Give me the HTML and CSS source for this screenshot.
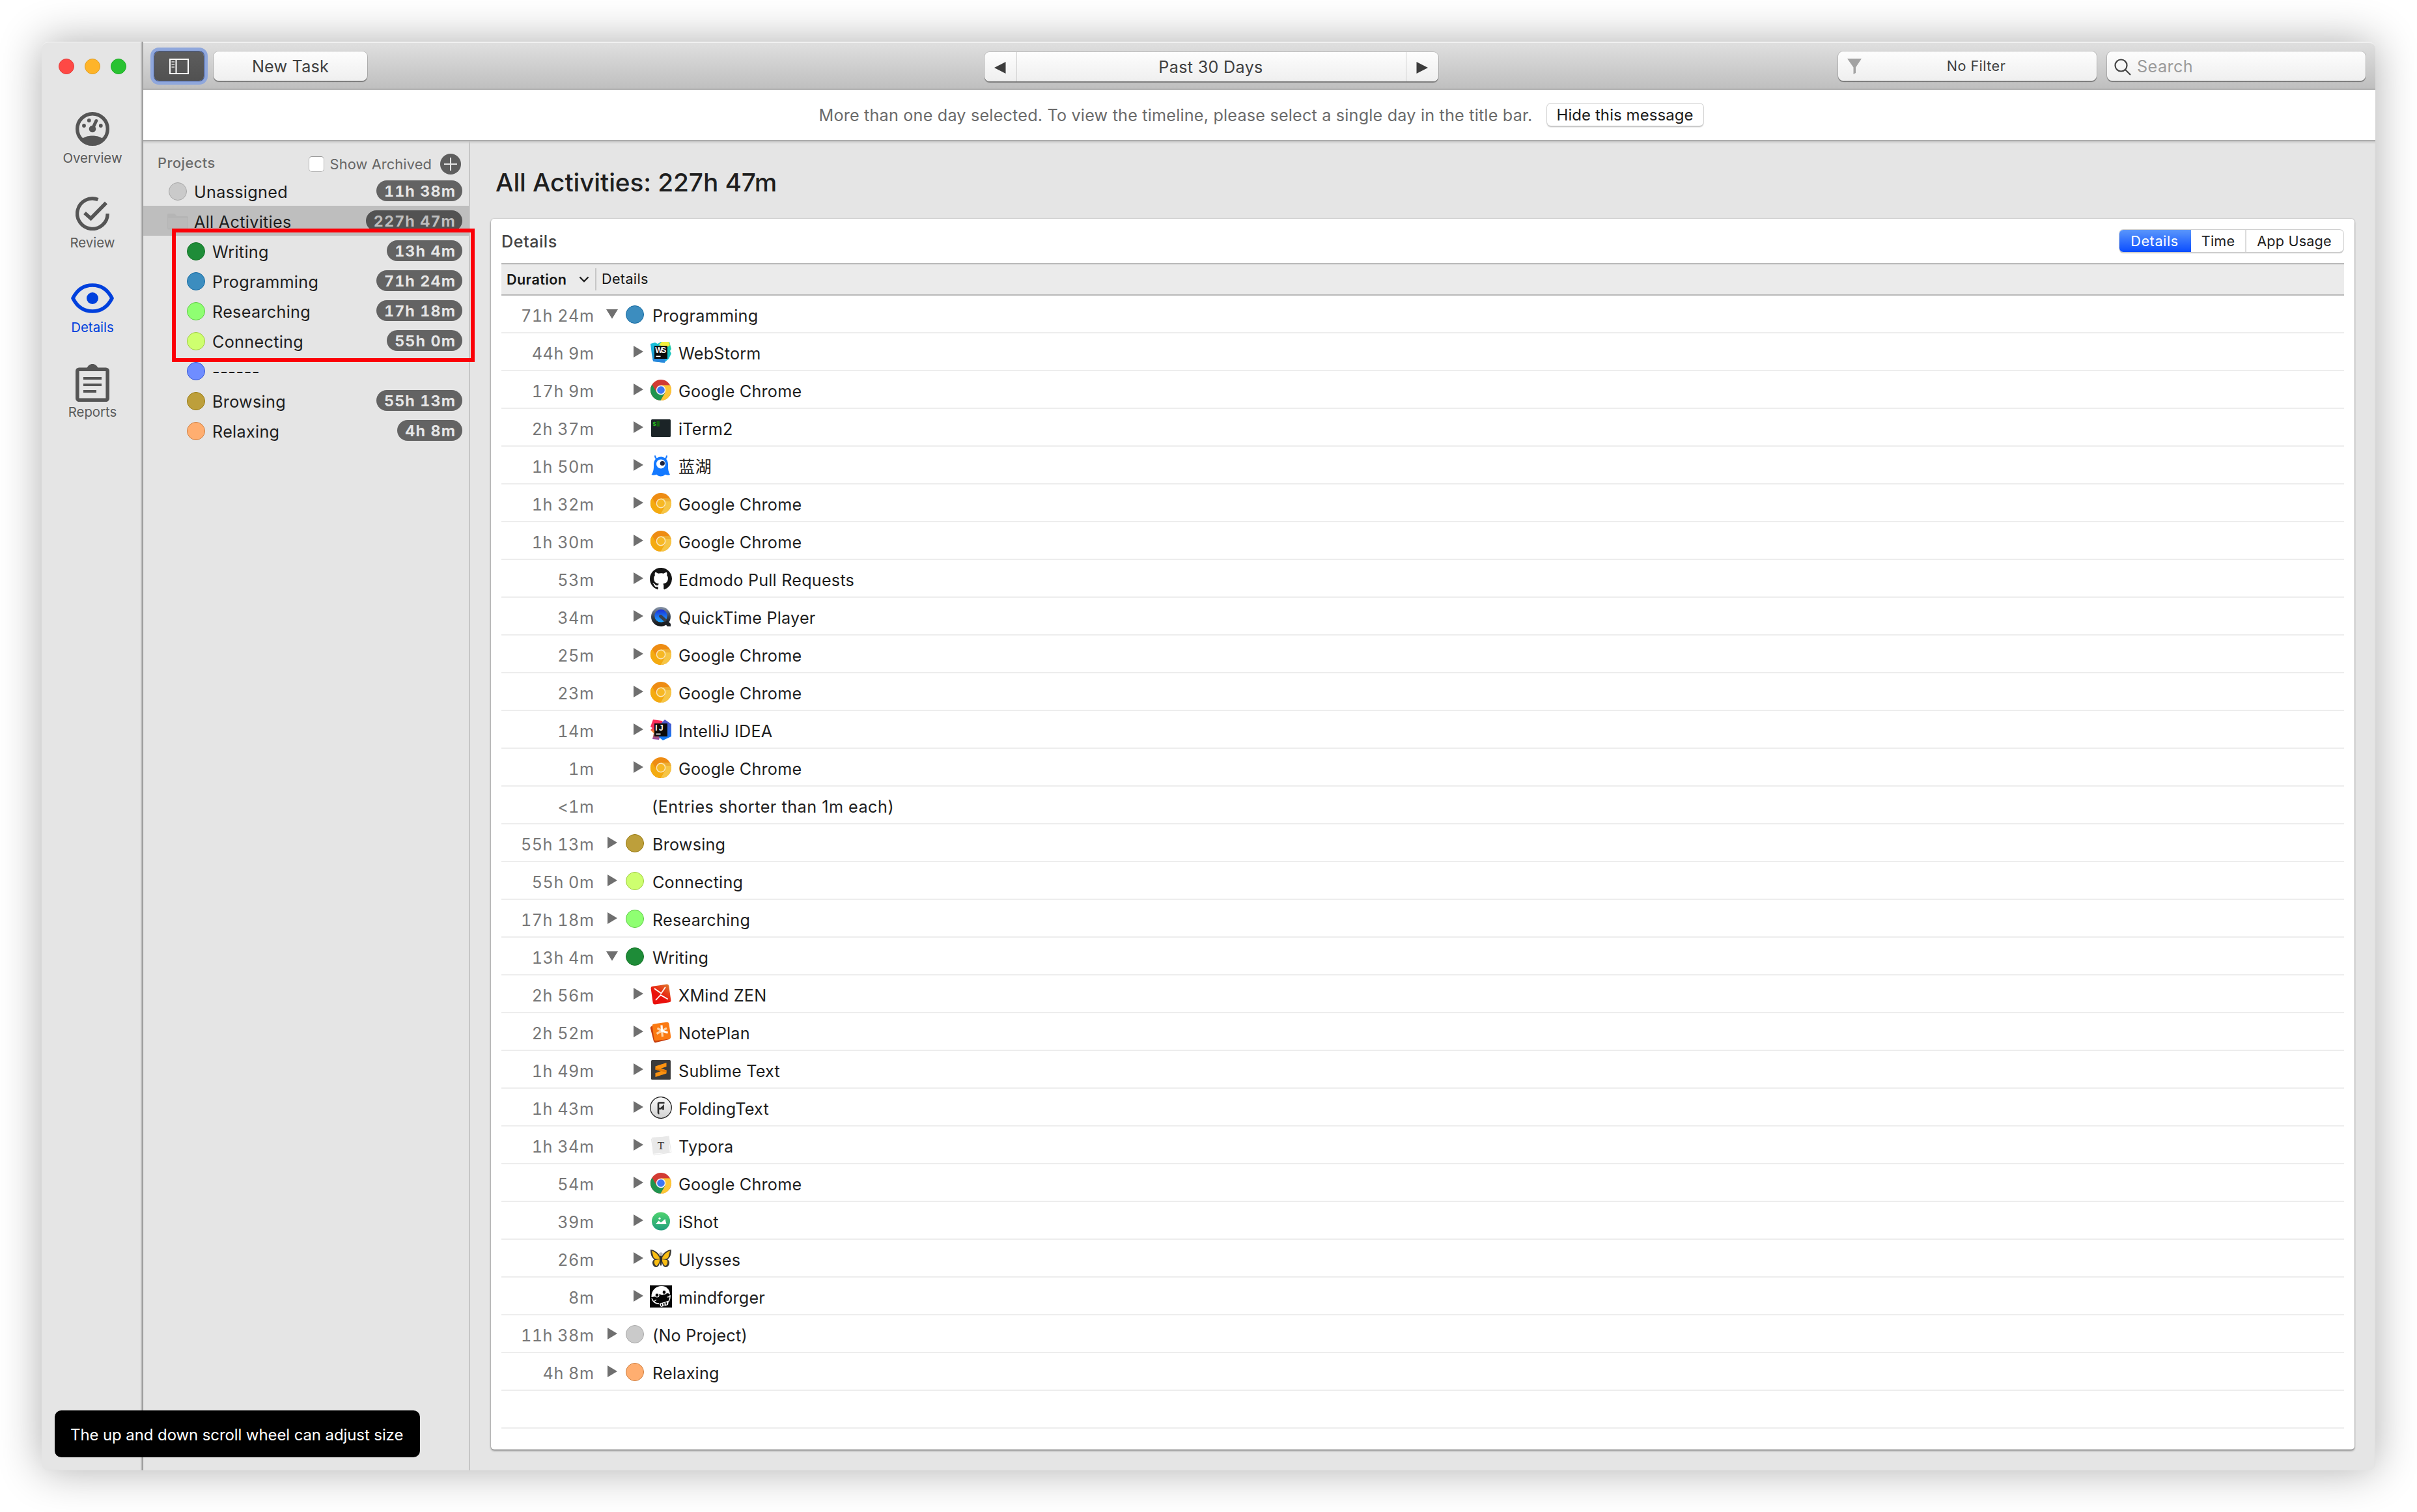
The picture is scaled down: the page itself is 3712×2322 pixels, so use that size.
FILE: index.html
```html
<!DOCTYPE html>
<html lang="en">
<head>
<meta charset="utf-8">
<title>All Activities</title>
<link rel="stylesheet" href="styles.css">
</head>
<body>
<svg class="defs" width="0" height="0" aria-hidden="true">
  <defs>
    <linearGradient id="g-ws" x1="0" y1="1" x2="1" y2="0"><stop offset="0" stop-color="#1f7fd6"/><stop offset=".5" stop-color="#19bfdc"/><stop offset="1" stop-color="#21d08f"/></linearGradient>
    <linearGradient id="g-qt" x1="0" y1="0" x2="0" y2="1"><stop offset="0" stop-color="#8b98ab"/><stop offset=".5" stop-color="#3b4350"/><stop offset="1" stop-color="#111"/></linearGradient>
    <linearGradient id="g-qb" x1="0" y1="0" x2="0" y2="1"><stop offset="0" stop-color="#1a2fd8"/><stop offset="1" stop-color="#1ea8ff"/></linearGradient>
    <linearGradient id="g-xm" x1="0" y1="1" x2="1" y2="0"><stop offset=".4" stop-color="#ea0f0c"/><stop offset="1" stop-color="#e07a2c"/></linearGradient>
    <linearGradient id="g-is" x1="0" y1="0" x2="0" y2="1"><stop offset="0" stop-color="#4fd36f"/><stop offset="1" stop-color="#1f9e7c"/></linearGradient>
    <linearGradient id="g-ft" x1="0" y1="0" x2="0" y2="1"><stop offset="0" stop-color="#fafafa"/><stop offset="1" stop-color="#d2d2d2"/></linearGradient>
    <linearGradient id="g-ijr" x1="0" y1="0" x2="0" y2="1"><stop offset="0" stop-color="#fe2857"/><stop offset=".45" stop-color="#f0335f"/><stop offset=".6" stop-color="#f68b2c"/><stop offset="1" stop-color="#8a3fa8"/></linearGradient>
    <linearGradient id="g-ijb" x1="0" y1="0" x2="0" y2="1"><stop offset="0" stop-color="#5a54c4"/><stop offset="1" stop-color="#087cfa"/></linearGradient>
  </defs>
  <symbol id="tri-r" viewBox="0 0 18 18"><path d="M2 0L17 9L2 18Z" fill="#6f6f6f"/></symbol>
  <symbol id="tri-d" viewBox="0 0 18 18"><path d="M0 2H18L9 16.5Z" fill="#6f6f6f"/></symbol>
  <symbol id="webstorm" viewBox="0 0 34 34">
    <path d="M1 4L8 2L12 4L17 1H30L33 12L31 15L33 19L29 27L22 33L5 31L3 20Z" fill="url(#g-ws)"/>
    <path d="M14 6L18 1H29L31 6L27 9Z" fill="#f3ee3d"/><path d="M4 27L24 26L23 33L6 31Z" fill="#2787dc"/>
    <rect x="7" y="7" width="20" height="20" fill="#0a0a0a"/>
    <text x="8.3" y="18" class="app-mono" textLength="17">WS</text><rect x="9.5" y="22.5" width="7" height="1.6" fill="#fff"/>
  </symbol>
  <symbol id="chrome" viewBox="-17 -17 34 34">
    <circle r="16" fill="#d23b33"/>
    <path d="M0 -7.5H14.13A16 16 0 0 1 -.57 16L6.5 3.75L0 0Z" fill="#fcc734"/>
    <path d="M6.5 3.75L-.57 16A16 16 0 0 1 -13.56 -8.49L-6.5 3.75L0 0Z" fill="#20944f"/>
    <circle r="7.3" fill="#f4f4f4"/><circle r="5.8" fill="#3d76f4"/>
  </symbol>
  <symbol id="canary" viewBox="-17 -17 34 34">
    <circle r="16" fill="#ee8c13"/>
    <path d="M0 -7.5H14.13A16 16 0 0 1 -.57 16L6.5 3.75L0 0Z" fill="#f6c544"/>
    <path d="M6.5 3.75L-.57 16A16 16 0 0 1 -13.56 -8.49L-6.5 3.75L0 0Z" fill="#f4ab10"/>
    <path d="M4 -7.5H14.13L15.5 -3L8 -3Z" fill="#e9a32c" opacity=".7"/>
    <circle r="7.4" fill="#fbe6bb"/><circle r="5.9" fill="#f7b824"/>
  </symbol>
  <symbol id="iterm" viewBox="0 0 34 34">
    <rect x="2" y="4" width="30" height="27" rx="1.5" fill="#1b2427"/>
    <text x="4.2" y="14.2" class="app-prompt">$</text><rect x="10.5" y="6.5" width="4.5" height="8.5" fill="#14600f"/>
  </symbol>
  <symbol id="lanhu" viewBox="0 0 34 34">
    <path d="M8 1.5C8 4 9 6 11 7.5M26 1.5C26 4 25 6 23 7.5" fill="none" stroke="#1a7cff" stroke-width="2"/>
    <path d="M17 3.5C23.500 3.500 28 8.500 28 15C28 20 27.500 25 31 31C28 32.500 25 31 23.500 30.800C21 33.500 18.500 33.500 17 33.500C15.500 33.500 13 33.500 10.500 30.800C9 31 6 32.500 2.500 31C6.500 25 6 20 6 15C6 8.500 10.500 3.500 17 3.500Z" fill="#1479ff"/>
    <circle cx="17" cy="14.5" r="7" fill="#fff"/><circle cx="19.3" cy="13.5" r="3.6" fill="#1c2440"/>
  </symbol>
  <symbol id="github" viewBox="0 0 16 16"><path fill="#141414" d="M8 0C3.58 0 0 3.58 0 8c0 3.54 2.29 6.53 5.47 7.59.4.07.55-.17.55-.38 0-.19-.01-.82-.01-1.49-2.01.37-2.53-.49-2.69-.94-.09-.23-.48-.94-.82-1.13-.28-.15-.68-.52-.01-.53.63-.01 1.08.58 1.23.82.72 1.21 1.87.87 2.33.66.07-.52.28-.87.51-1.07-1.78-.2-3.64-.89-3.64-3.95 0-.87.31-1.59.82-2.15-.08-.2-.36-1.02.08-2.12 0 0 .67-.21 2.2.82.64-.18 1.32-.27 2-.27.68 0 1.36.09 2 .27 1.53-1.04 2.2-.82 2.2-.82.44 1.1.16 1.92.08 2.12.51.56.82 1.27.82 2.15 0 3.07-1.87 3.75-3.65 3.95.29.25.54.73.54 1.48 0 1.07-.01 1.93-.01 2.2 0 .21.15.46.55.38A8.013 8.013 0 0016 8c0-4.42-3.58-8-8-8z"/></symbol>
  <symbol id="quicktime" viewBox="0 0 34 34">
    <circle cx="17" cy="17" r="15" fill="url(#g-qt)"/><path d="M20 24L24 20L32 28V32H27Z" fill="#1d2126"/>
    <circle cx="17" cy="15.800" r="9.800" fill="url(#g-qb)"/><path d="M14.800 14.800C15.800 13.600 17.200 13.600 18.500 14.800L26.500 22L23 25.500L15 18.300C13.800 17.200 13.800 15.900 14.800 14.800Z" fill="#3a4049"/>
  </symbol>
  <symbol id="intellij" viewBox="0 0 34 34">
    <path d="M5 1L19 3L22 10L14 32L4 31L6 22L1 17L4 14L1 12Z" fill="url(#g-ijr)"/>
    <path d="M18 6L23 1L33 8V27L20 33L14 28Z" fill="url(#g-ijb)"/>
    <rect x="7" y="7" width="20" height="20" fill="#0a0a0a"/>
    <text x="8.300" y="18" class="app-mono" textLength="12.500">IJ</text><rect x="9.500" y="22.500" width="7" height="1.600" fill="#fff"/>
  </symbol>
  <symbol id="xmind" viewBox="0 0 34 34">
    <rect x="3" y="3" width="28" height="28" rx="3" fill="url(#g-xm)" transform="rotate(-8 17 17)"/>
    <path d="M7.500 8.500L17.500 15.500L23.500 6.500M9.500 25.500L16.500 18L27 24" fill="none" stroke="#fff" stroke-width="1.800" stroke-linecap="round" stroke-linejoin="round"/>
  </symbol>
  <symbol id="noteplan" viewBox="0 0 34 34">
    <rect x="3" y="5" width="26" height="26" rx="3" fill="#c8400f" transform="rotate(-14 16 18)"/>
    <rect x="5" y="3" width="26" height="26" rx="3" fill="#fb7a12" transform="rotate(-8 18 16)"/>
    <g fill="none" stroke-width="3.200"><path d="M18.500 15L11.500 11M18.500 15L10.500 19.500M18.500 15L19.500 24M18.500 15L26 11" stroke="#fdd3a5"/><path d="M18 6.500L18.500 15L27.500 18" stroke="#fff"/></g>
  </symbol>
  <symbol id="sublime" viewBox="0 0 34 34">
    <rect x="2" y="2" width="30" height="30" rx="1.500" fill="#3b3b3b"/>
    <path d="M8.500 11.500L25.500 6V12L17 14.800L25.500 17.500V22.500L8.500 28V22L17 19L8.500 16.500Z" fill="#fb9210"/><path d="M8.500 16.500V14.500L25.500 17.500V21L17 19Z" fill="#e57a05"/>
  </symbol>
  <symbol id="folding" viewBox="0 0 34 34">
    <circle cx="17" cy="17" r="16.300" fill="url(#g-ft)" stroke="#222" stroke-width="1.300"/>
    <path d="M22.500 9.500H14.500C13.500 9.500 13 10 13 11V26M13 26H14.500M13 18.500H17L20.500 15V20.500" fill="none" stroke="#2c2c2c" stroke-width="2.600"/>
  </symbol>
  <symbol id="typora" viewBox="0 0 34 34">
    <rect x="4" y="5" width="27" height="25" fill="#fff" stroke="#e2e2e2" stroke-width=".8" transform="rotate(-9 17 17)"/>
    <rect x="4" y="4" width="26" height="25" fill="#e9e9e9" transform="rotate(-3 17 17)"/>
    <text x="17" y="22.500" class="app-serif">T</text>
  </symbol>
  <symbol id="ishot" viewBox="0 0 34 34">
    <circle cx="17" cy="17.500" r="14" fill="url(#g-is)"/>
    <path d="M9 22L13.500 16.500L17 19.500L23.500 14L25.500 22Z" fill="#fff"/><circle cx="15" cy="13.200" r="1.600" fill="#fff"/>
  </symbol>
  <symbol id="ulysses" viewBox="0 0 34 34">
    <path d="M1 3C6 3 13 7 16 14H18C21 7 28 3 33 3C33 9 32 15 27 18C30 20 31 23 29 27C27 31 22 31 20 27L18 21H16L14 27C12 31 7 31 5 27C3 23 4 20 7 18C2 15 1 9 1 3Z" fill="#3c3a35"/>
    <path d="M3 5C8 6 13 11 15.500 16.800C11 18 7 17.500 5.500 14.500ZM31 5C26 6 21 11 18.500 16.800C23 18 27 17.500 28.500 14.500ZM7.500 19.200L15.500 17.800C15 22 13 26.500 10.500 28C7 27 6 22 7.500 19.200ZM26.500 19.200L18.500 17.800C19 22 21 26.500 23.500 28C27 27 28 22 26.500 19.200Z" fill="#f9bd13"/>
    <ellipse cx="17" cy="19" rx="1.800" ry="9" fill="#2b2b2b"/><circle cx="17" cy="10" r="2.800" fill="#b5b5b5"/>
  </symbol>
  <symbol id="mindforger" viewBox="0 0 34 34">
    <rect width="34" height="34" fill="#050505"/>
    <path d="M2.500 18C2 8 9 1 18 1C26 1 31 7 31 14L28 12L23 13L19 15L14 13L9 17Z" fill="#fff"/>
    <circle cx="11" cy="15" r="3" fill="#000" stroke="#fff" stroke-width="1.200"/><circle cx="22" cy="10.500" r="3" fill="#000" stroke="#fff" stroke-width="1.200"/>
    <path d="M3 20C5 26 9 28 14 28M31 15C31.500 19 30.500 22 29 25M27 18L31 17M6 25L10 22" fill="none" stroke="#fff" stroke-width="1.400"/>
    <path d="M14.500 28L29 23.500L28 30L17 33Z" fill="#fff"/><path d="M18 28V31.500M21.500 27L21.800 31M25 26L25.300 29.500" stroke="#000" stroke-width="1.700"/>
  </symbol>
</svg>

<main class="window">
  <nav class="rail">
    <div class="lights"><i class="light red"></i><i class="light amber"></i><i class="light green"></i></div>
    <a class="rail-item"><svg width="52" height="52" viewBox="0 0 52 52"><circle cx="26" cy="26" r="23.300" fill="none" stroke="#555" stroke-width="5.400"/><path d="M8 43C12 38.500 19 36.500 26 36.500S40 38.500 44 43C39 48.500 33 51 26 51S13 48.500 8 43Z" fill="#555"/><circle cx="26" cy="26" r="5.300" fill="#555"/><path d="M26 26L31.800 13.500" stroke="#555" stroke-width="5" stroke-linecap="round"/><circle cx="13" cy="21" r="2.900" fill="#555"/><circle cx="20.800" cy="13" r="2.900" fill="#555"/><circle cx="38.800" cy="21" r="2.900" fill="#555"/></svg><span>Overview</span></a>
    <a class="rail-item"><svg width="52" height="52" viewBox="0 0 52 52"><path d="M34.500 4.500A23.300 23.300 0 1 0 49.200 26" fill="none" stroke="#555" stroke-width="5.400"/><path d="M14 25L23.500 33.500L47 9.500" fill="none" stroke="#555" stroke-width="5.600"/></svg><span>Review</span></a>
    <a class="rail-item active"><svg width="66" height="46" viewBox="0 0 66 46"><path d="M3 23C10 9 21 3 33 3S56 9 63 23C56 37 45 43 33 43S10 37 3 23Z" fill="none" stroke="#0040dd" stroke-width="5.600" stroke-linejoin="round"/><circle cx="33" cy="23" r="9" fill="#0040dd"/></svg><span>Details</span></a>
    <a class="rail-item"><svg width="52" height="58" viewBox="0 0 52 58"><path d="M17 7C19 2.500 22 0 26 0S33 2.500 35 7Z" fill="#555"/><rect x="2.800" y="8.300" width="46.400" height="47" rx="2.500" fill="none" stroke="#555" stroke-width="5.600"/><path d="M12 22H40M12 32H40M12 42H32" stroke="#555" stroke-width="4"/></svg><span>Reports</span></a>
  </nav>

  <section class="body">
    <header class="toolbar">
      <div class="tools">
        <button class="toggle"><svg width="30" height="24" viewBox="0 0 30 24" fill="none" stroke="#fff" stroke-width="2"><rect x="1" y="1" width="28" height="22"/><path d="M10.500 1V23"/><path d="M3.500 5H8M3.500 9H8M3.500 13H8" stroke-width="1.500" opacity=".8"/></svg></button>
        <button class="btn new-task">New Task</button>
      </div>
      <div class="btn range">
        <span class="step"><svg width="18" height="18" viewBox="0 0 18 18"><path d="M17.500 0V18L0 9Z" fill="#3c3c3c"/></svg></span>
        <span class="period">Past 30 Days</span>
        <span class="step"><svg width="18" height="18" viewBox="0 0 18 18"><path d="M.5 0V18L18 9Z" fill="#3c3c3c"/></svg></span>
      </div>
      <div class="finders">
        <div class="btn filter"><svg width="22" height="24" viewBox="0 0 22 24"><path d="M0 0H22L13 13.500V22L9.500 24V13.500Z" fill="#a3a3a3"/></svg><span>No Filter</span></div>
        <div class="btn search"><svg width="26" height="26" viewBox="0 0 26 26" fill="none" stroke="#444" stroke-width="2.200"><circle cx="10.500" cy="10.500" r="9"/><path d="M17 17L25 25"/></svg><span>Search</span></div>
      </div>
    </header>

    <div class="notice"><span>More than one day selected. To view the timeline, please select a single day in the title bar.</span><button class="mini">Hide this message</button></div>

    <div class="columns">
      <aside class="projects">
        <div class="projects-head"><span class="heading">Projects</span><i class="check"></i><span class="archived">Show Archived</span><svg width="32" height="32" viewBox="0 0 32 32"><circle cx="16" cy="16" r="16" fill="#5e5e5e"/><path d="M16 6V26M6 16H26" stroke="#e6e6e6" stroke-width="2"/></svg></div>
        <div class="project top"><i class="dot grey"></i><span class="name">Unassigned</span><b class="badge">11h 38m</b></div>
        <div class="project top selected"><svg class="folder" width="32" height="26" viewBox="0 0 32 26"><path d="M0 3Q0 1 2 1H11L15 5H30Q32 5 32 7V23Q32 25.500 30 25.500H2Q0 25.500 0 23Z" fill="#b5b5b5"/><path d="M1 8H31V23.500H1Z" fill="#bababa"/></svg><span class="name">All Activities</span><b class="badge">227h 47m</b></div>
        <div class="project"><i class="dot green"></i><span class="name">Writing</span><b class="badge">13h 4m</b></div>
        <div class="project"><i class="dot blue"></i><span class="name">Programming</span><b class="badge">71h 24m</b></div>
        <div class="project"><i class="dot mint"></i><span class="name">Researching</span><b class="badge">17h 18m</b></div>
        <div class="project"><i class="dot lime"></i><span class="name">Connecting</span><b class="badge">55h 0m</b></div>
        <div class="project"><i class="dot indigo"></i><span class="name dashes">------</span></div>
        <div class="project"><i class="dot gold"></i><span class="name">Browsing</span><b class="badge">55h 13m</b></div>
        <div class="project"><i class="dot orange"></i><span class="name">Relaxing</span><b class="badge">4h 8m</b></div>
        <div class="marker"></div>
      </aside>

      <section class="content">
        <h1 class="title">All Activities: 227h 47m</h1>
        <div class="panel">
          <div class="panel-head"><h2>Details</h2><div class="tabs"><span class="tab on">Details</span><span class="tab middle">Time</span><span class="tab usage">App Usage</span></div></div>
          <div class="thead"><span class="th-duration">Duration</span><svg width="16" height="10" viewBox="0 0 16 10"><path d="M1.500 1.500L8 8L14.500 1.500" fill="none" stroke="#222" stroke-width="2.400"/></svg><span class="th-details">Details</span></div>
          <div class="row"><span class="time">71h 24m</span><svg class="tri"><use href="#tri-d"/></svg><i class="dot blue"></i><span class="label">Programming</span></div>
          <div class="row sub"><span class="time">44h 9m</span><svg class="tri"><use href="#tri-r"/></svg><svg class="app"><use href="#webstorm"/></svg><span class="label">WebStorm</span></div>
          <div class="row sub"><span class="time">17h 9m</span><svg class="tri"><use href="#tri-r"/></svg><svg class="app"><use href="#chrome"/></svg><span class="label">Google Chrome</span></div>
          <div class="row sub"><span class="time">2h 37m</span><svg class="tri"><use href="#tri-r"/></svg><svg class="app"><use href="#iterm"/></svg><span class="label">iTerm2</span></div>
          <div class="row sub"><span class="time">1h 50m</span><svg class="tri"><use href="#tri-r"/></svg><svg class="app"><use href="#lanhu"/></svg><span class="label" lang="zh">蓝湖</span></div>
          <div class="row sub"><span class="time">1h 32m</span><svg class="tri"><use href="#tri-r"/></svg><svg class="app"><use href="#canary"/></svg><span class="label">Google Chrome</span></div>
          <div class="row sub"><span class="time">1h 30m</span><svg class="tri"><use href="#tri-r"/></svg><svg class="app"><use href="#canary"/></svg><span class="label">Google Chrome</span></div>
          <div class="row sub"><span class="time">53m</span><svg class="tri"><use href="#tri-r"/></svg><svg class="app"><use href="#github"/></svg><span class="label">Edmodo Pull Requests</span></div>
          <div class="row sub"><span class="time">34m</span><svg class="tri"><use href="#tri-r"/></svg><svg class="app"><use href="#quicktime"/></svg><span class="label">QuickTime Player</span></div>
          <div class="row sub"><span class="time">25m</span><svg class="tri"><use href="#tri-r"/></svg><svg class="app"><use href="#canary"/></svg><span class="label">Google Chrome</span></div>
          <div class="row sub"><span class="time">23m</span><svg class="tri"><use href="#tri-r"/></svg><svg class="app"><use href="#canary"/></svg><span class="label">Google Chrome</span></div>
          <div class="row sub"><span class="time">14m</span><svg class="tri"><use href="#tri-r"/></svg><svg class="app"><use href="#intellij"/></svg><span class="label">IntelliJ IDEA</span></div>
          <div class="row sub"><span class="time">1m</span><svg class="tri"><use href="#tri-r"/></svg><svg class="app"><use href="#canary"/></svg><span class="label">Google Chrome</span></div>
          <div class="row rest"><span class="time">&lt;1m</span><span class="label">(Entries shorter than 1m each)</span></div>
          <div class="row"><span class="time">55h 13m</span><svg class="tri"><use href="#tri-r"/></svg><i class="dot gold"></i><span class="label">Browsing</span></div>
          <div class="row"><span class="time">55h 0m</span><svg class="tri"><use href="#tri-r"/></svg><i class="dot lime"></i><span class="label">Connecting</span></div>
          <div class="row"><span class="time">17h 18m</span><svg class="tri"><use href="#tri-r"/></svg><i class="dot mint"></i><span class="label">Researching</span></div>
          <div class="row"><span class="time">13h 4m</span><svg class="tri"><use href="#tri-d"/></svg><i class="dot green"></i><span class="label">Writing</span></div>
          <div class="row sub"><span class="time">2h 56m</span><svg class="tri"><use href="#tri-r"/></svg><svg class="app"><use href="#xmind"/></svg><span class="label">XMind ZEN</span></div>
          <div class="row sub"><span class="time">2h 52m</span><svg class="tri"><use href="#tri-r"/></svg><svg class="app"><use href="#noteplan"/></svg><span class="label">NotePlan</span></div>
          <div class="row sub"><span class="time">1h 49m</span><svg class="tri"><use href="#tri-r"/></svg><svg class="app"><use href="#sublime"/></svg><span class="label">Sublime Text</span></div>
          <div class="row sub"><span class="time">1h 43m</span><svg class="tri"><use href="#tri-r"/></svg><svg class="app"><use href="#folding"/></svg><span class="label">FoldingText</span></div>
          <div class="row sub"><span class="time">1h 34m</span><svg class="tri"><use href="#tri-r"/></svg><svg class="app"><use href="#typora"/></svg><span class="label">Typora</span></div>
          <div class="row sub"><span class="time">54m</span><svg class="tri"><use href="#tri-r"/></svg><svg class="app"><use href="#chrome"/></svg><span class="label">Google Chrome</span></div>
          <div class="row sub"><span class="time">39m</span><svg class="tri"><use href="#tri-r"/></svg><svg class="app"><use href="#ishot"/></svg><span class="label">iShot</span></div>
          <div class="row sub"><span class="time">26m</span><svg class="tri"><use href="#tri-r"/></svg><svg class="app"><use href="#ulysses"/></svg><span class="label">Ulysses</span></div>
          <div class="row sub"><span class="time">8m</span><svg class="tri"><use href="#tri-r"/></svg><svg class="app"><use href="#mindforger"/></svg><span class="label">mindforger</span></div>
          <div class="row"><span class="time">11h 38m</span><svg class="tri"><use href="#tri-r"/></svg><i class="dot grey"></i><span class="label">(No Project)</span></div>
          <div class="row"><span class="time">4h 8m</span><svg class="tri"><use href="#tri-r"/></svg><i class="dot orange"></i><span class="label">Relaxing</span></div>
          <div class="row"></div>
        </div>
      </section>
    </div>
  </section>
  <div class="toast">The up and down scroll wheel can adjust size</div>
</main>
</body>
</html>
```
FILE: styles.css
```css
* { box-sizing: border-box; }
body {
  margin: 0;
  height: 2322px;
  padding: 64px;
  overflow: hidden;
  background: #fff;
  color: #1e1e1e;
  font: 25.2px "Inter", "Noto Sans CJK SC", sans-serif;
  letter-spacing: .2px;
}
button { font: inherit; letter-spacing: inherit; color: inherit; padding: 0; border: 0; }
svg { flex: none; display: block; }
.defs { position: absolute; }
.app, symbol { overflow: visible; }

.window {
  position: relative;
  display: grid;
  grid-template-columns: 156px 1fr;
  width: 3584px;
  height: 2194px;
  border-radius: 10px;
  background: #e5e5e5;
  box-shadow: 0 0 66px rgba(0, 0, 0, .32);
}

/* Navigation rail */
.rail {
  padding-top: 26px;
  border-right: 2px solid #a0a0a0;
  box-shadow: inset -2px 0 2px -1px rgba(0, 0, 0, .25), inset 0 2px 0 -0.5px #f0f0f0;
  border-radius: 10px 0 0 10px;
}
.lights { display: flex; gap: 16px; padding-left: 26px; margin-bottom: 54px; }
.light { width: 24px; height: 24px; border-radius: 50%; }
.light.red { background: #fe4945; border: 1px solid #e33e3c; }
.light.amber { background: #feb429; border: 1px solid #e09e22; }
.light.green { background: #29c231; border: 1px solid #1eac27; }
.rail-item {
  height: 130px;
  padding-left: 2px;
  display: grid;
  grid-template-rows: 60px 24px;
  row-gap: 3px;
  align-items: center;
  justify-items: center;
  align-content: start;
  color: #5a5a5a;
  font-size: 20.4px;
  line-height: 24px;
  letter-spacing: 0;
}
.rail-item.active { color: #0040dd; }

/* Toolbar */
.body { display: flex; flex-direction: column; min-width: 0; }
.toolbar {
  height: 74px;
  display: grid;
  grid-template-columns: 1275px 697px 1fr;
  align-items: start;
  padding: 13px 15px 0 17px;
  background: linear-gradient(#dfdfdf, #bfbfbf);
  border-top: 2px solid #f0f0f0;
  border-bottom: 2px solid #b0b0b0;
  border-radius: 0 10px 0 0;
}
.btn {
  height: 45px;
  display: flex;
  align-items: center;
  border-radius: 8px;
  background: linear-gradient(#fdfdfd, #efefef);
  box-shadow: 0 0 0 1px rgba(0, 0, 0, .14), 0 1.5px 1px rgba(0, 0, 0, .35);
  color: #404040;
}
.tools { display: flex; gap: 15px; }
.toggle {
  width: 76px;
  height: 45px;
  display: flex;
  align-items: center;
  justify-content: center;
  border-radius: 7px;
  background: linear-gradient(#5d5d5d, #515151);
  box-shadow: 0 0 0 1px #3f5590, 0 0 0 6px #8fa7dc;
}
.new-task { width: 236px; justify-content: center; padding-top: 1px; }
.range { margin-top: 1px; }
.step { width: 49px; height: 45px; display: flex; align-items: center; justify-content: center; padding: 2px 2px 0 0; }
.period { flex: 1; line-height: 45px; text-align: center; border: solid #d0d0d0; border-width: 0 1.5px; padding: 1px 2px 0 0; height: 45px; letter-spacing: .3px; }
.finders { display: flex; justify-content: flex-end; gap: 16px; }
.finders .btn { width: 397px; }
.filter { padding: 0 14px; font-size: 21.6px; letter-spacing: .45px; }
.filter span { flex: 1; text-align: center; padding: 0 0 2px 5px; }
.search { padding: 0 11px; gap: 9px; color: #9b9b9b; letter-spacing: .4px; }
.search svg { margin-top: 2px; }
.search span { padding-top: 1px; }

.notice {
  height: 79px;
  display: flex;
  align-items: center;
  justify-content: center;
  gap: 22px;
  padding: 0 0 1px 5px;
  background: #fff;
  border-bottom: 2px solid #acacac;
  color: #6b6b6b;
  letter-spacing: .19px;
}
.notice span { padding-top: 2px; }
.mini {
  width: 240px;
  height: 34px;
  border-radius: 6px;
  background: #fff;
  box-shadow: 0 0 0 1px #d2d2d2, 0 2px 2px rgba(0, 0, 0, .3);
  color: #1b1b1b;
  font-size: 24px;
  line-height: 36px;
  letter-spacing: .07px;
}

/* Projects list */
.columns { flex: 1; display: grid; grid-template-columns: 502px 1fr; min-height: 0; box-shadow: inset 0 3px 3px -1px rgba(0, 0, 0, .12); border-radius: 0 0 10px 0; }
.projects { position: relative; border-right: 2px solid #c6c6c6; }
.projects-head {
  height: 53px;
  padding: 17px 12px 0 22px;
  display: flex;
  align-items: center;
  color: #666;
  font-size: 21.8px;
  letter-spacing: .12px;
}
.heading { flex: 1; font-weight: 500; letter-spacing: .45px; margin-bottom: 4px; color: #6b6b6b; }
.check { width: 24px; height: 24px; border: 1px solid #b5b5b5; border-top-color: #999; border-radius: 5px; background: #fff; margin-right: 9px; }
.archived { margin-right: 13px; }
.project { height: 46px; display: flex; align-items: flex-start; padding: 0 10px 0 67px; }
.project.top { padding-left: 39px; }
.project.selected { background: #bebebe; }
.dot { flex: none; width: 28px; height: 28px; border-radius: 50%; border: 1.5px solid; margin-top: 10px; }
.dot.grey { background: #cacaca; border-color: #a9a9a9; }
.dot.green { background: #1e8c38; border-color: #167529; }
.dot.blue { background: #3c8dbf; border-color: #156ba2; }
.dot.mint { background: #8fff72; border-color: #5ccb44; }
.dot.lime { background: #ceff6f; border-color: #9dcb40; }
.dot.indigo { background: #6f8dff; border-color: #3455d2; }
.dot.gold { background: #bd9f3b; border-color: #97790f; }
.dot.orange { background: #ffae70; border-color: #ce7d3e; }
.folder { margin: 11px -2px 0 -2px; }
.name { flex: 1; padding: 4px 0 0 11px; line-height: 42px; letter-spacing: .3px; }
.dashes { letter-spacing: .6px; }
.badge {
  height: 32px;
  margin-top: 7px;
  padding: 2px 10px 0 12px;
  border-radius: 16px;
  background: #636363;
  color: #e6e6e6;
  font-size: 23.3px;
  line-height: 30px;
  letter-spacing: 1.1px;
  font-variant-numeric: tabular-nums;
}
.selected .badge { background: #525252; color: #bebebe; }
.marker { position: absolute; left: 44px; top: 134px; width: 465px; height: 205px; border: 6px solid #fb0007; z-index: 2; }

/* Details panel */
.content { padding: 0 32px 32px; }
.title { margin: 0; height: 119px; padding-left: 7px; font-size: 38.8px; font-weight: 540; line-height: 126px; letter-spacing: -.1px; }
.panel {
  height: 1890px;
  padding: 0 16px;
  border-radius: 5px;
  background: #fff;
  box-shadow: 0 0 2px rgba(0, 0, 0, .3), 0 2px 3px rgba(0, 0, 0, .4);
}
.panel-head { height: 68px; display: flex; justify-content: space-between; }
.panel-head h2 { margin: 0; font-size: 25.2px; font-weight: 500; line-height: 70px; letter-spacing: .5px; color: #444; }
.tabs { display: flex; height: 34px; margin: 17px 1px 0 0; border-radius: 6px; box-shadow: 0 0 0 1px #d0d0d0, 0 2px 1px rgba(0, 0, 0, .25); font-size: 21.6px; line-height: 35px; text-align: center; letter-spacing: .2px; }
.tab.on { width: 110px; padding-right: 2px; border-radius: 6px 0 0 6px; background: linear-gradient(#5a96fb, #0a4dff); color: #fff; letter-spacing: .6px; }
.tab.middle { width: 85px; border-right: 2px solid #dcdcdc; }
.tab.usage { width: 149px; padding-right: 2px; }
.thead {
  height: 50px;
  display: flex;
  align-items: center;
  border: solid #b9b9b9;
  border-width: 2px 0;
  background: #ebebeb;
  font-size: 21.6px;
  letter-spacing: .35px;
  color: #151515;
}
.thead span { padding-bottom: 1px; }
.th-duration { width: 119px; padding-left: 8px; font-weight: 600; letter-spacing: .4px; }
.th-details { margin-left: 9px; padding-left: 8px; line-height: 33px; border-left: 2px solid #c6c6c6; }
.row { height: 58px; display: flex; align-items: flex-start; border-bottom: 2px solid #ededed; }
.row .time { width: 144px; padding: 6px 1.5px 0 0; text-align: right; color: #777; line-height: 50px; letter-spacing: .5px; font-variant-numeric: tabular-nums; }
.tri { width: 18px; height: 18px; margin: 19px 12px 0 17px; }
.row .dot { margin: 15px 13px 0 0; }
.label { padding-top: 6px; line-height: 50px; letter-spacing: .22px; }
.sub .tri { margin: 19px 9px 0 57px; }
.app { width: 34px; height: 34px; margin: 12px 10px 0 0; }
.rest .label { margin-left: 87px; letter-spacing: .5px; }

.app-mono { font: 700 12px "Liberation Sans", sans-serif; fill: #fff; letter-spacing: 0; }
.app-prompt { font: 700 9px "Liberation Mono", monospace; fill: #27c41c; letter-spacing: 0; }
.app-serif { font: 17px "Liberation Serif", serif; fill: #333; text-anchor: middle; letter-spacing: 0; }

.toast {
  position: absolute;
  left: 20px;
  top: 2102px;
  width: 561px;
  height: 72px;
  padding-left: 24px;
  border-radius: 10px;
  background: #000;
  color: #fff;
  font-size: 24px;
  line-height: 75px;
  letter-spacing: -.1px;
  white-space: nowrap;
}
```
